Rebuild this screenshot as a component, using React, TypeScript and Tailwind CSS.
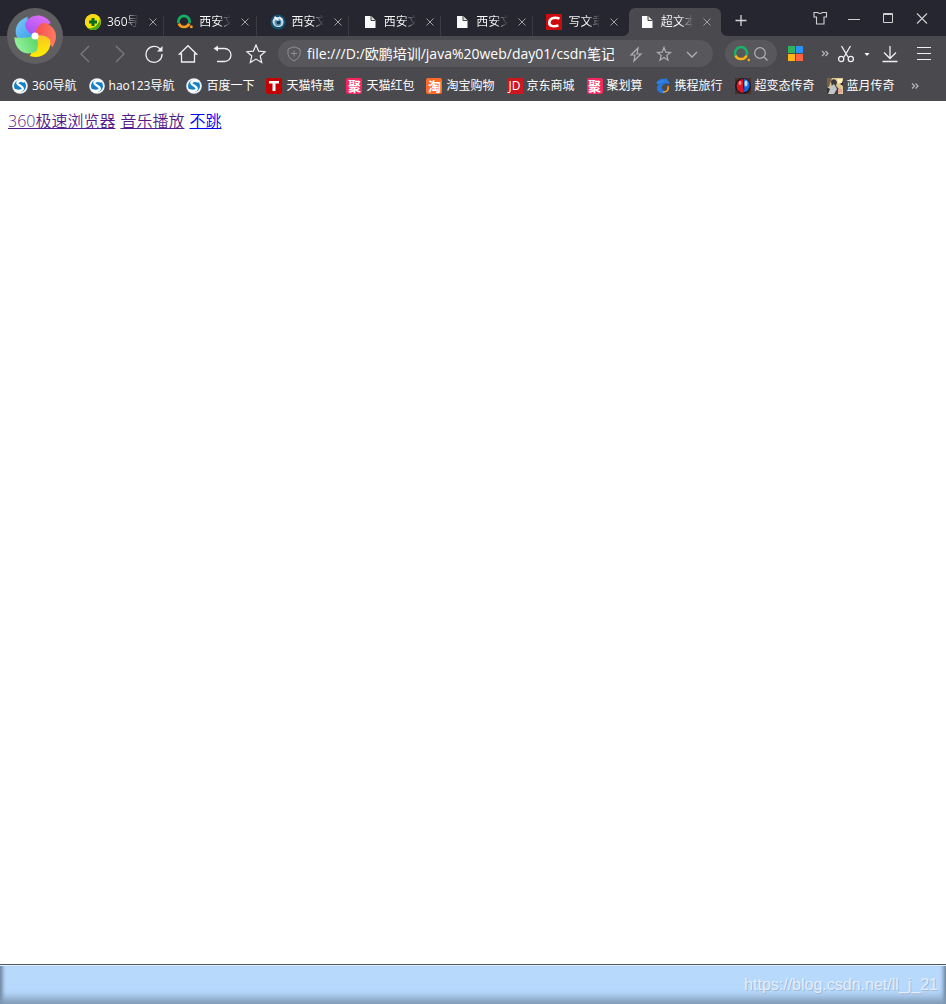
import type { ReactNode } from "react";

type IconName =
  | "nav360"
  | "q"
  | "eye"
  | "doc"
  | "csdn"
  | "sogou"
  | "tmall"
  | "ju"
  | "tao"
  | "jd"
  | "ctrip"
  | "orb"
  | "moon";

interface Tab {
  icon: IconName;
  title: string;
  active?: boolean;
}

interface Bookmark {
  icon: IconName;
  label: string;
}

const tabs: Tab[] = [
  { icon: "nav360", title: "360导" },
  { icon: "q", title: "西安文" },
  { icon: "eye", title: "西安文" },
  { icon: "doc", title: "西安文" },
  { icon: "doc", title: "西安文" },
  { icon: "csdn", title: "写文章" },
  { icon: "doc", title: "超文本", active: true },
];

const bookmarks: Bookmark[] = [
  { icon: "sogou", label: "360导航" },
  { icon: "sogou", label: "hao123导航" },
  { icon: "sogou", label: "百度一下" },
  { icon: "tmall", label: "天猫特惠" },
  { icon: "ju", label: "天猫红包" },
  { icon: "tao", label: "淘宝购物" },
  { icon: "jd", label: "京东商城" },
  { icon: "ju", label: "聚划算" },
  { icon: "ctrip", label: "携程旅行" },
  { icon: "orb", label: "超变态传奇" },
  { icon: "moon", label: "蓝月传奇" },
];

function SiteIcon({ name }: { name: IconName }) {
  switch (name) {
    case "tmall":
      return (
        <span className="flex size-4 shrink-0 items-center justify-center rounded-xs bg-[#c40000]">
          <svg className="size-4" viewBox="0 0 16 16" fill="#fff">
            <path d="M3 3h10v2.500H9.500V13h-3V5.500H3z" />
          </svg>
        </span>
      );
    case "ju":
      return (
        <span className="flex size-4 shrink-0 items-center justify-center rounded-xs bg-[#f8265f] text-[13px] leading-4 font-bold text-white">
          聚
        </span>
      );
    case "tao":
      return (
        <span className="flex size-4 shrink-0 items-center justify-center rounded-xs bg-[#ff6a2b] text-[13px] leading-4 font-bold text-white">
          淘
        </span>
      );
    case "jd":
      return (
        <span className="flex size-4 shrink-0 items-center justify-center bg-[#cc1620] text-xs leading-4 font-medium text-white">
          JD
        </span>
      );
    case "nav360":
      return (
        <svg className="size-4 shrink-0" viewBox="0 0 16 16">
          <circle cx="8" cy="8" r="8" fill="#f2e500" />
          <path d="M0 8a8 8 0 0 1 13-6C9 2 3 5 1 12A8 8 0 0 1 0 8z" fill="#ffd51c" />
          <path d="M3 14c5 1 10-2 12-9 2 5-1 11-7 11-2 0-4-1-5-2z" fill="#46a814" />
          <path d="M6.500 4h3v2.500H12v3H9.500V12h-3V9.500H4v-3h2.500z" fill="#096b22" />
        </svg>
      );
    case "q":
      return (
        <svg className="size-4 shrink-0" viewBox="0 0 16 16" fill="none" strokeWidth="2.700">
          <path d="M1.600 9A5.600 5.600 0 1 1 12.400 9" stroke="#12b062" />
          <path d="M1.800 9.500a5.600 5.600 0 0 0 10.400 0" stroke="#f79a22" />
          <circle cx="14.300" cy="12.700" r="1.500" fill="#f79a22" />
        </svg>
      );
    case "eye":
      return (
        <svg className="size-4 shrink-0" viewBox="0 0 16 16">
          <circle cx="8" cy="8" r="7.500" fill="#155174" />
          <path d="M2.500 7c.5-3 3-4 5.500-4 3 0 5.500 2 5.500 5S11.500 13 8 13s-5.500-3-5.500-6z" fill="#cde0ea" />
          <circle cx="8" cy="8.500" r="3.500" fill="#5f92af" />
          <circle cx="8.500" cy="8.500" r="2" fill="#123f61" />
          <path d="M5 2l4 4-1 1-4-3zM9 2l4 3-2 1z" fill="#fff" />
        </svg>
      );
    case "doc":
      return (
        <svg className="size-4 shrink-0" viewBox="0 0 16 16">
          <path d="M3 2h6l4.500 4.500V14H3z" fill="#fafafa" />
          <path d="M9 2v4.500h4.500" fill="#ddd" stroke="#444" strokeWidth="1" />
        </svg>
      );
    case "csdn":
      return (
        <svg className="size-4 shrink-0" viewBox="0 0 16 16">
          <path d="M0 0h16v16H0z" fill="#ca0c0c" />
          <path
            d="M13.500 4.500C7 2.500 3.500 5 3.300 8.500 3 12 7 13 12.500 11.500"
            fill="none"
            stroke="#fff"
            strokeWidth="2.600"
          />
        </svg>
      );
    case "sogou":
      return (
        <svg className="size-4 shrink-0" viewBox="0 0 16 16">
          <circle cx="8" cy="8" r="7.800" fill="#eef4f8" />
          <circle cx="8" cy="8" r="6" fill="#1580c6" />
          <path
            d="M12.500 3.500C8 2 5 3.500 5.500 5.500c.5 1.800 5.300 2.500 5.300 5 0 2.300-4.300 3.200-8 1.500"
            fill="none"
            stroke="#fff"
            strokeWidth="2.400"
          />
        </svg>
      );
    case "ctrip":
      return (
        <svg className="size-4 shrink-0" viewBox="0 0 16 16">
          <path
            d="M1 5c2-3 5-5 9-4l2-1v2c2 1 3 3 2 4-2-1-3-1-5 0-3 2-3 5 0 7l1 2c-4 1-8-1-8-5 0-2 1-3 2-4z"
            fill="#2878de"
          />
          <path d="M13 8c1 4-1 6-5 6" fill="none" stroke="#f5a21c" strokeWidth="1.600" />
          <path d="M2 6c2-2 4-3 7-3" fill="none" stroke="#3f8fec" />
        </svg>
      );
    case "orb":
      return (
        <svg className="size-4 shrink-0" viewBox="0 0 16 16">
          <path d="M0 0h16v16H0z" fill="#4b3028" />
          <circle cx="8" cy="8" r="7.800" fill="#130f1c" />
          <path d="M8.500 1a7 7 0 0 0 0 14c1.500-3-1.500-6 0-14z" fill="#dd1723" />
          <path d="M9 1c5 0 7 6 5 9-1 3-3 4-5 4 1-4-1-7 0-13z" fill="#1768df" />
          <ellipse cx="5" cy="5" rx="1.500" ry="2" fill="#ff8e84" />
          <ellipse cx="11" cy="5.500" rx="1.500" ry="3" fill="#b9e3ff" />
        </svg>
      );
    case "moon":
      return (
        <svg className="size-4 shrink-0" viewBox="0 0 16 16">
          <path d="M0 0h16v16H0z" fill="#dfc791" />
          <path d="M0 0h5L2 9H0z" fill="#7a6145" />
          <path d="M4 3c2-3 5-2 6 1l-1 4 3 3-1 5H3l2-6z" fill="#3a3b40" />
          <path d="M3 9l4-3 3 5-3 5H2z" fill="#bfc5c9" />
          <path d="M0 9l3 2-2 5H0zM13 6l3-3v5z" fill="#37302c" />
          <path d="M11 11h4v4h-4z" fill="#e6a196" />
          <path d="M10 1h5v4h-4z" fill="#fff0bd" />
        </svg>
      );
  }
}

const petals = [
  { turn: -72, from: "#2f9be8", to: "#6fc0f5" },
  { turn: 0, from: "#9a4df0", to: "#dc6cf5" },
  { turn: 72, from: "#f2474e", to: "#ff7a62" },
  { turn: 144, from: "#f5b92e", to: "#ffee00" },
  { turn: 216, from: "#4fd05f", to: "#93f09a" },
];

function Logo() {
  return (
    <svg className="size-14" viewBox="-28 -28 56 56">
      <defs>
        {petals.map(({ turn, from, to }) => (
          <linearGradient key={turn} id={`petal${turn}`} x1="0" y1="1" x2=".6" y2="0">
            <stop offset="0" stopColor={from} />
            <stop offset="1" stopColor={to} />
          </linearGradient>
        ))}
      </defs>
      <circle r="28" fill="#5f5f61" />
      {petals.map(({ turn }) => (
        <path
          key={turn}
          transform={`rotate(${turn})`}
          d="M0 0C-4-1-10-6-10-12-6-21 7-25 16-13 12-12 6-7 0 0z"
          fill={`url(#petal${turn})`}
        />
      ))}
      <circle r="3.500" fill="#fff" />
    </svg>
  );
}

interface IconButtonProps {
  label: string;
  className?: string;
  children: ReactNode;
}

function IconButton({ label, className = "w-[34px] text-[#f0f0f0]", children }: IconButtonProps) {
  return (
    <button
      type="button"
      aria-label={label}
      className={`flex h-7 shrink-0 items-center justify-center ${className}`}
    >
      <svg
        className="size-5"
        viewBox="0 0 20 20"
        fill="none"
        stroke="currentColor"
        strokeWidth="1.300"
      >
        {children}
      </svg>
    </button>
  );
}

const windowButton = "w-[34px] text-[#d0d0d3]";

const starPath =
  "M10 1l2.600 6.100 6.600.6-5 4.300 1.500 6.500-5.700-3.400-5.700 3.400L5.800 12l-5-4.300 6.600-.6z";

function TabStrip() {
  return (
    <div className="flex h-9 items-end bg-[#25262f] pl-[75px]">
      <div className="flex w-[646px] shrink items-end">
        {tabs.map((tab, i) => (
          <div
            key={i}
            className={`relative flex h-7 min-w-0 flex-1 items-center pl-2.5 ${
              tab.active ? "rounded-t-md bg-[#4a494d]" : ""
            }`}
          >
            {tab.active && (
              <>
                <svg className="absolute right-full bottom-0 size-1.5" viewBox="0 0 6 6">
                  <path d="M6 0v6H0a6 6 0 0 0 6-6z" fill="#4a494d" />
                </svg>
                <svg className="absolute bottom-0 left-full size-1.5" viewBox="0 0 6 6">
                  <path d="M0 0v6h6a6 6 0 0 1-6-6z" fill="#4a494d" />
                </svg>
              </>
            )}
            <SiteIcon name={tab.icon} />
            <span
              className={`ml-1.5 w-8 bg-linear-to-r from-white from-60% bg-clip-text text-xs whitespace-nowrap text-transparent ${
                tab.active ? "to-[#4a494d]" : "to-[#25262f]"
              }`}
            >
              {tab.title}
            </span>
            <button type="button" aria-label="关闭标签页" className="ml-2.5">
              <svg className="size-2" viewBox="0 0 8 8" stroke="#a0a0a4">
                <path d="M.5.500l7 7M7.500.500l-7 7" />
              </svg>
            </button>
            {i < 5 && <span className="mr-[3px] ml-auto h-5 w-px self-end bg-[#3b3c43]" />}
          </div>
        ))}
      </div>
      <IconButton label="新建标签页" className="w-10 text-[#d5d5d8]">
        <path d="M10 3v11M4.500 8.500h11" />
      </IconButton>
      <div className="mr-[7px] ml-auto flex h-9 items-center">
        <IconButton label="皮肤" className={windowButton}>
          <path d="M4 4.500h3.500q2.500 2 5 0H16.500v4.500h-2.500V16H6.500V9H4z" strokeWidth="1.100" />
        </IconButton>
        <IconButton label="最小化" className={windowButton}>
          <path d="M4 11.500h12" strokeWidth="1" />
        </IconButton>
        <IconButton label="最大化" className={windowButton}>
          <path d="M5.500 5.500h9v9h-9zM5 6.500h10" strokeWidth="1" />
        </IconButton>
        <IconButton label="关闭" className={windowButton}>
          <path d="M5 5.500l10 10M15 5.500l-10 10" strokeWidth="1.100" />
        </IconButton>
      </div>
    </div>
  );
}

function Toolbar() {
  return (
    <div className="flex h-[35px] items-center pr-[5px] pl-[67px]">
      <IconButton label="后退" className="w-[35px] text-[#7b7b7e]">
        <path d="M14 2L6 10l8 8" />
      </IconButton>
      <IconButton label="前进" className="w-[35px] text-[#7b7b7e]">
        <path d="M6 2l8 8-8 8" />
      </IconButton>
      <IconButton label="刷新">
        <path d="M17 6.500A8 8 0 1 0 18 10" />
        <path d="M18.500 2v5.500H13z" fill="currentColor" stroke="none" />
      </IconButton>
      <IconButton label="主页">
        <path d="M1.500 10L10 1.700l8.500 8.300H16.500v8h-13v-8z" />
      </IconButton>
      <IconButton label="恢复">
        <path d="M4 4.500h8.500a6.500 6.500 0 0 1 0 13H5" />
        <path d="M1.500 4.500L6 1.500v6z" fill="currentColor" stroke="none" />
      </IconButton>
      <IconButton label="收藏">
        <path d={starPath} strokeWidth="1.200" />
      </IconButton>

      <div className="ml-[5px] flex h-[27px] min-w-0 flex-1 items-center rounded-full bg-[#58585c] pr-2 pl-[9px]">
        <svg className="h-4 w-3.5 shrink-0" viewBox="0 0 14 16" fill="none" stroke="#8f8f93">
          <path d="M7 .8L13 3v5.500q-.5 4-6 6.500-5.500-2.500-6-6.500V3zM7 4.500v6M4 7.500h6" />
        </svg>
        <input
          aria-label="地址栏"
          className="ml-1.5 min-w-0 flex-1 bg-transparent text-sm text-white outline-none"
          defaultValue="file:///D:/欧鹏培训/java%20web/day01/csdn笔记"
        />
        <div className="ml-2 flex">
          <IconButton label="加速" className="w-7 text-[#b0b0b3]">
            <path d="M12 4L5 11h4l-1 6 7-7h-4z" strokeWidth="1.200" />
          </IconButton>
          <IconButton label="加入收藏夹" className="w-7 text-[#b0b0b3]">
            <path
              d="M10 3.500l1.800 4.600 4.700.3-3.700 3 1.200 4.800-4-2.700-4 2.700 1.200-4.800-3.700-3 4.700-.3z"
              strokeWidth="1.200"
            />
          </IconButton>
          <IconButton label="展开" className="w-[27px] text-[#b0b0b3]">
            <path d="M5 8l5 5 5-5" />
          </IconButton>
        </div>
      </div>

      <button
        type="button"
        aria-label="搜索"
        className="ml-3 flex h-[27px] w-[52px] shrink-0 items-center justify-center gap-1 rounded-full bg-[#58585c]"
      >
        <svg className="size-4" viewBox="0 0 16 16" fill="none" strokeWidth="2.500">
          <path d="M1.500 9.500A6 6 0 1 1 12.500 9.500" stroke="#1ab267" />
          <path d="M1.500 9.500a6 6 0 0 0 11 0" stroke="#fbb614" />
          <circle cx="14.800" cy="14" r="1.200" fill="#fbb614" />
        </svg>
        <svg
          className="size-3.5"
          viewBox="0 0 14 14"
          fill="none"
          stroke="#b0b0b3"
          strokeWidth="1.200"
        >
          <circle cx="6" cy="6" r="5.300" />
          <path d="M10 10l3.500 3.500" />
        </svg>
      </button>
      <button type="button" aria-label="应用" className="ml-[11px] shrink-0">
        <svg className="size-[15px]" viewBox="0 0 15 15">
          <path d="M0 0h7v7H0z" fill="#2db35d" />
          <path d="M8 0h7v7H8z" fill="#2c91fb" />
          <path d="M0 8h7v7H0z" fill="#ffb413" />
          <path d="M8 8h7v7H8z" fill="#ff6343" />
        </svg>
      </button>
      <IconButton label="更多扩展" className="ml-3 w-5 text-[#b4b4b7]">
        <path d="M7 7l2.500 2.500L7 12M10.500 7l2.500 2.500-2.500 2.500" />
      </IconButton>
      <IconButton label="截图" className="w-[22px] text-[#f0f0f0]">
        <path d="M5.500 2l6.500 11M14.500 2L8 13" />
        <circle cx="5.200" cy="15" r="2.600" />
        <circle cx="14.800" cy="15" r="2.600" />
      </IconButton>
      <IconButton label="截图选项" className="w-5 text-white">
        <path d="M7.500 9h5L10 12z" fill="currentColor" stroke="none" />
      </IconButton>
      <IconButton label="下载" className="w-[26px] text-[#f0f0f0]">
        <path d="M10 2v12M4 8.500l6 6 6-6M2.500 17.500h15" />
      </IconButton>
      <IconButton label="菜单" className="ml-1 w-[34px] text-[#f0f0f0]">
        <path d="M3 3.500h14M3 9.500h14M3 15.500h14" strokeWidth="1" />
      </IconButton>
    </div>
  );
}

function BookmarkBar() {
  return (
    <nav className="flex h-[30px] items-center gap-3 pl-3">
      {bookmarks.map(({ icon, label }, i) => (
        <a key={i} href="#" className="flex shrink-0 items-center gap-1 text-xs text-white">
          <SiteIcon name={icon} />
          {label}
        </a>
      ))}
      <IconButton label="更多书签" className="-ml-0.5 w-5 text-[#b4b4b7]">
        <path d="M7 7.500l2.500 2.500L7 12.500M10.500 7.500l2.500 2.500-2.500 2.500" />
      </IconButton>
    </nav>
  );
}

export default function App() {
  return (
    <div className="flex min-h-screen flex-col overflow-hidden bg-white font-['Open_Sans','Noto_Sans_CJK_SC',sans-serif]">
      <header className="relative bg-[#4a494d]">
        <TabStrip />
        <Toolbar />
        <BookmarkBar />
        <button type="button" aria-label="360极速浏览器" className="absolute top-2 left-[7px]">
          <Logo />
        </button>
      </header>

      <main className="flex flex-1 gap-[5px] px-2 pt-2 font-[350]">
        <a href="#" className="self-start text-[#551a8b] underline">
          360极速浏览器
        </a>
        <a href="#" className="self-start text-[#551a8b] underline">
          音乐播放
        </a>
        <a href="#" className="self-start text-[#0000ee] underline">
          不跳
        </a>
      </main>

      <footer className="flex h-10 items-center justify-end border-t border-[#4b5865] bg-[#b7d9fc] pr-2 shadow-[inset_0_1px_0_#e3f1ff,inset_0_-10px_8px_-4px_#7f99b5,inset_5px_0_4px_-3px_#60758d,inset_-5px_0_4px_-3px_#60758d]">
        <span className="font-['Liberation_Sans',Arial,sans-serif] text-base text-[#e3eefa] [text-shadow:1px_1px_0_#9fb9d5]">
          https://blog.csdn.net/ll_j_21
        </span>
      </footer>
    </div>
  );
}
